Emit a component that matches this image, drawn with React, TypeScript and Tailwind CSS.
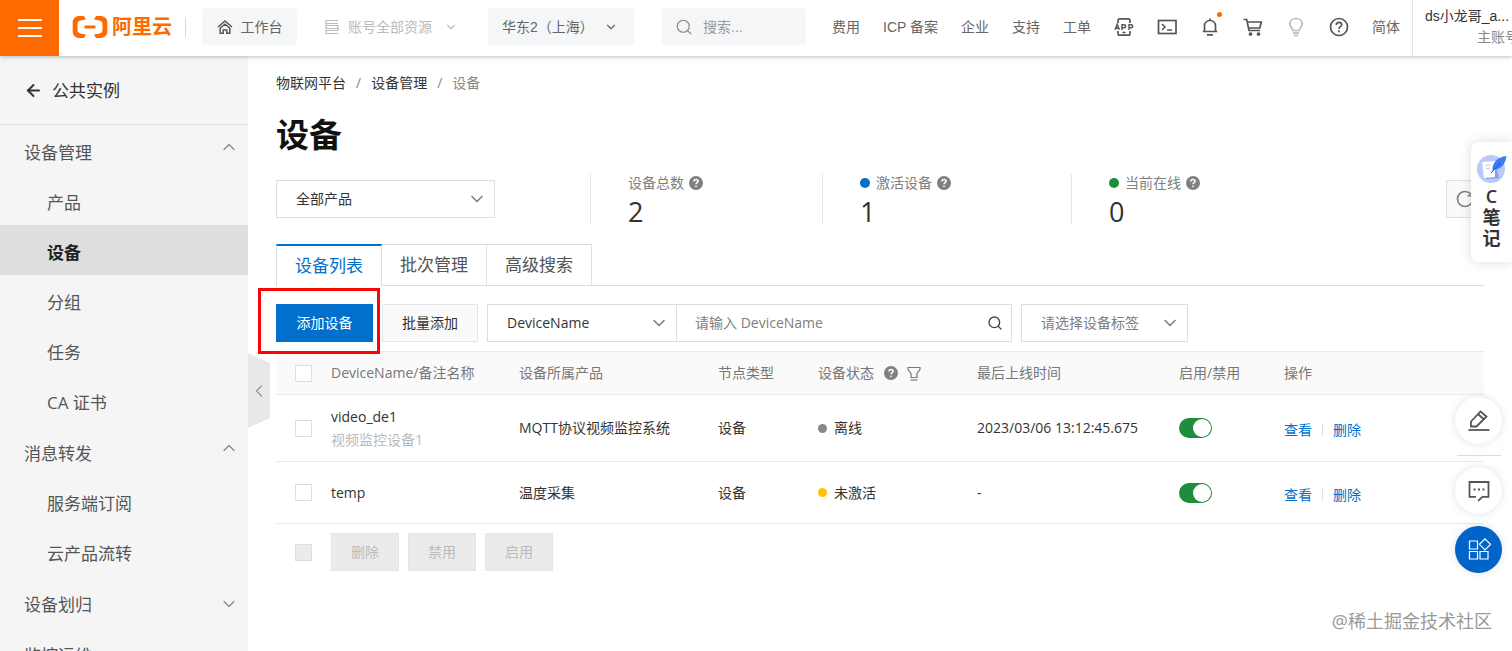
import type { ReactNode } from "react";
import {
  ArrowLeft,
  ChevronDown,
  ChevronLeft,
  ChevronUp,
  RotateCw,
  Search,
} from "lucide-react";
import { clsx } from "clsx";

type MenuItem = {
  label: string;
  kind: "group" | "item";
  open?: boolean;
  active?: boolean;
};

const menu: MenuItem[] = [
  { label: "设备管理", kind: "group", open: true },
  { label: "产品", kind: "item" },
  { label: "设备", kind: "item", active: true },
  { label: "分组", kind: "item" },
  { label: "任务", kind: "item" },
  { label: "CA 证书", kind: "item" },
  { label: "消息转发", kind: "group", open: true },
  { label: "服务端订阅", kind: "item" },
  { label: "云产品流转", kind: "item" },
  { label: "设备划归", kind: "group" },
  { label: "监控运维", kind: "group" },
];

const devices = [
  {
    name: "video_de1",
    remark: "视频监控设备1",
    product: "MQTT协议视频监控系统",
    type: "设备",
    status: "离线",
    dot: "bg-[#888888]",
    lastOnline: "2023/03/06 13:12:45.675",
  },
  {
    name: "temp",
    remark: "",
    product: "温度采集",
    type: "设备",
    status: "未激活",
    dot: "bg-[#ffc300]",
    lastOnline: "-",
  },
];

function LogoMark() {
  return (
    <svg width="36" height="22" viewBox="0 0 36 22" fill="none">
      <path
        d="M12 0H8C3.500 0 .7 2.500.7 6.500v9C.7 19.500 3.500 22 8 22h4l2-3.600-4.500-.7c-2.400-.4-4-1.200-4-3.700V8c0-2.500 1.600-3.300 4-3.700l4.500-.7z"
        fill="#ff6a00"
      />
      <path
        d="M24 0h4c4.500 0 7.300 2.500 7.300 6.500v9c0 4-2.800 6.500-7.300 6.500h-4l-2-3.600 4.500-.7c2.400-.4 4-1.200 4-3.700V8c0-2.500-1.600-3.300-4-3.700L22 3.600z"
        fill="#ff6a00"
      />
      <path d="M12.500 11h11" stroke="#ff6a00" strokeWidth="3" />
    </svg>
  );
}

function HomeIcon() {
  return (
    <svg width="16" height="16" viewBox="0 0 16 16" fill="none" stroke="#555" strokeWidth="1.500">
      <path d="M1 8 8 2l7 6" />
      <path d="M3.200 9v5.200h3V11h3.600v3.200h3V9L8 5.200z" />
    </svg>
  );
}

function StackIcon() {
  return (
    <svg width="16" height="16" viewBox="0 0 16 16" fill="none" stroke="#bbb" strokeWidth="1.200">
      <path d="M14 1.500H2v3h12M2 6.500h12v3H2zM14 11.500H2v3h12M2 4.500v2M14 9.500v2" />
    </svg>
  );
}

function TopIcon({ children, label, pale }: { children: ReactNode; label: string; pale?: boolean }) {
  return (
    <button type="button" aria-label={label} className="relative size-5 shrink-0">
      <svg
        width="20"
        height="20"
        viewBox="0 0 20 20"
        fill="none"
        stroke={pale ? "#bbb" : "#555"}
        strokeWidth="1.700"
      >
        {children}
      </svg>
    </button>
  );
}

function Help() {
  return (
    <svg width="14" height="14" viewBox="0 0 14 14" className="shrink-0">
      <circle cx="7" cy="7" r="7" fill="#808080" />
      <path
        d="M4.900 5.500C4.900 4.200 5.800 3.500 7 3.500s2.100.7 2.100 1.800C9.100 6.700 7 6.700 7 8.300"
        stroke="#fff"
        strokeWidth="1.500"
        fill="none"
      />
      <circle cx="7" cy="10.300" r="0.900" fill="#fff" />
    </svg>
  );
}

function FilterIcon() {
  return (
    <svg width="14" height="16" viewBox="0 0 14 16" fill="none" stroke="#777" strokeWidth="1.200">
      <path d="M1 2.500h12v2L10 8.500v4H4v-4L1 4.500z" />
      <path d="M3.500 15h7" />
    </svg>
  );
}

function Select({ label, value, className, muted }: { label: string; value: string; className: string; muted?: boolean }) {
  return (
    <div className={clsx("relative h-[38px] border border-[#dedede]", className)}>
      <select
        aria-label={label}
        className={clsx(
          "h-full w-full appearance-none bg-transparent pr-8 pl-[19px] text-sm outline-none",
          muted ? "text-[#808080]" : "text-[#333]",
        )}
      >
        <option>{value}</option>
      </select>
      <ChevronDown
        size={20}
        strokeWidth={2}
        className="pointer-events-none absolute top-2 right-[7px] text-[#808080]"
      />
    </div>
  );
}

function Checkbox({ label, disabled }: { label: string; disabled?: boolean }) {
  return (
    <input
      type="checkbox"
      aria-label={label}
      disabled={disabled}
      className="block size-[17px] appearance-none border border-[#dedede] bg-white disabled:bg-[#ebebeb]"
    />
  );
}

function Toggle({ label }: { label: string }) {
  return (
    <label className="relative block h-5 w-[33px]">
      <input
        type="checkbox"
        role="switch"
        defaultChecked
        aria-label={label}
        className="peer block h-5 w-[33px] appearance-none rounded-full bg-gray-300 checked:bg-[#1e8e3e]"
      />
      <span className="pointer-events-none absolute top-px left-px size-[18px] rounded-full bg-white peer-checked:right-px peer-checked:left-auto" />
    </label>
  );
}

function Stat({ label, value, dot, className }: { label: string; value: string; dot?: string; className?: string }) {
  return (
    <div className={clsx("h-[51px] border-l border-[#e8e8e8] pl-[37px]", className)}>
      <div className="flex h-[18px] items-center text-sm text-[#808080]">
        {dot && <span className={clsx("mr-[6px] size-[10px] rounded-full", dot)} />}
        <span className="mr-[5px]">{label}</span>
        <Help />
      </div>
      <div className="mt-1 text-[27px] leading-8 text-[#333]">{value}</div>
    </div>
  );
}

function TopBar() {
  return (
    <header className="relative z-20 flex h-14 shrink-0 items-center bg-white font-['Liberation_Sans','Noto_Sans_CJK_SC',sans-serif] text-sm text-[#666] shadow-[0_1px_4px_rgba(0,0,0,0.25)]">
      <button
        type="button"
        aria-label="菜单"
        className="flex h-14 w-[59px] shrink-0 flex-col items-center justify-center gap-[6px] bg-[#ff6a00]"
      >
        <span className="h-[2px] w-6 bg-white" />
        <span className="h-[2px] w-6 bg-white" />
        <span className="h-[2px] w-6 bg-white" />
      </button>
      <div className="flex h-full min-w-0 flex-1 items-center pb-[3px]">
        <a href="#" className="ml-[13px] flex shrink-0 items-center gap-1 text-xl font-bold text-[#ff6a00]">
          <LogoMark />
          阿里云
        </a>
        <span className="ml-[13px] h-5 w-px shrink-0 bg-[#d8d8d8]" />
        <a
          href="#"
          className="ml-4 flex h-[37px] w-[95px] shrink-0 items-center justify-center gap-2 rounded-sm bg-[#f4f6f7]"
        >
          <HomeIcon />
          工作台
        </a>
        <button type="button" className="ml-[27px] flex shrink-0 items-center gap-2 text-[#bbb]">
          <StackIcon />
          <span className="mr-1">账号全部资源</span>
          <ChevronDown size={14} />
        </button>
        <div className="relative ml-[30px] h-[37px] w-[146px] shrink-0 rounded-sm bg-[#f4f6f7]">
          <select aria-label="地域" className="h-full w-full appearance-none bg-transparent pl-[14px] outline-none">
            <option>华东2（上海）</option>
          </select>
          <ChevronDown size={14} className="pointer-events-none absolute top-3 right-4" />
        </div>
        <label className="ml-7 flex h-[37px] min-w-0 flex-1 items-center gap-[10px] rounded-sm bg-[#f4f6f7] pl-[13px]">
          <Search size={18} strokeWidth={1.500} className="shrink-0 text-[#888]" />
          <input
            type="text"
            aria-label="搜索"
            placeholder="搜索..."
            className="w-full min-w-0 bg-transparent outline-none placeholder:text-[#999]"
          />
        </label>
        <nav className="ml-[26px] flex shrink-0 items-center gap-[23px] pr-3">
          <a href="#">费用</a>
          <a href="#">ICP 备案</a>
          <a href="#">企业</a>
          <a href="#">支持</a>
          <a href="#">工单</a>
          <TopIcon label="应用">
            <path d="M4 6V3.500C4 2.500 4.700 1.800 5.700 1.800h8.600c1 0 1.700.7 1.700 1.700V6M4 14v2.500c0 1 .7 1.700 1.700 1.700h8.600c1 0 1.700-.7 1.700-1.700V14M8.500 15.500h3" />
            <path
              d="m1 12.800 2.200-5.600 2.200 5.600M1.800 11.200h2.800M8 13V7.700h2c2.300 0 2.300 3 0 3H8M15 13V7.700h2c2.300 0 2.300 3 0 3h-2"
              strokeWidth="1.400"
            />
          </TopIcon>
          <TopIcon label="命令行">
            <rect x="1.500" y="3.500" width="17.500" height="13" />
            <path d="m5 7 3 3-3 3M10 13h5" strokeWidth="1.500" />
          </TopIcon>
          <div className="relative flex">
            <TopIcon label="消息">
              <path d="M4.500 14.500V9C4.500 5.800 6.700 3.500 10 3.500s5.500 2.300 5.500 5.500v5.500M2.800 14.500h14.400M10 1.500v2M7 17.800h6" />
            </TopIcon>
            <span className="absolute -top-[5px] -right-[2px] size-[5px] rounded-full bg-[#ff6a00]" />
          </div>
          <TopIcon label="购物车">
            <path d="M.5 2.500h3.200L6 13.500h11M4.500 5h13.800l-1.500 6H5.800" />
            <circle cx="7.500" cy="17" r="1" />
            <circle cx="15.500" cy="17" r="1" />
          </TopIcon>
          <TopIcon label="提示" pale>
            <path d="M7 13.500c0-2-3.200-3-3.200-6.500C3.800 3.800 6.500 1.500 10 1.500S16.200 3.800 16.200 7c0 3.500-3.200 4.500-3.200 6.500zM7 16.200h6M8 18.500h4" />
          </TopIcon>
          <TopIcon label="帮助">
            <circle cx="10" cy="10" r="8.500" />
            <path d="M7.300 8C7.300 6.200 8.400 5.300 10 5.300s2.700 1 2.700 2.400C12.700 9.700 10 9.700 10 12" />
            <path d="M10 13.300v1.900" />
          </TopIcon>
          <a href="#">简体</a>
        </nav>
      </div>
      <div className="h-14 w-[100px] shrink-0 overflow-hidden border-l border-[#e5e5e5] pl-3">
        <div className="flex w-[94px] flex-col pt-[6px] leading-[21px]">
          <span className="whitespace-nowrap text-[#333]">ds小龙哥_a...</span>
          <span className="self-end text-[#888]">主账号</span>
        </div>
      </div>
    </header>
  );
}

function Sidebar() {
  return (
    <aside className="w-[248px] shrink-0 overflow-hidden bg-[#f5f5f5] text-[17px] text-[#555]">
      <a href="#" className="flex h-[69px] items-center gap-[9px] border-b border-[#dcdcdc] pl-6 text-[#333]">
        <ArrowLeft size={19} strokeWidth={2.500} />
        <span className="pt-[2px]">公共实例</span>
      </a>
      <ul>
        {menu.map((m) => (
          <li key={m.label} className={clsx(m.kind === "group" && "not-first:mt-px")}>
            <a
              href="#"
              className={clsx(
                "flex h-[50px] items-center justify-between pr-[9px]",
                m.kind === "group" ? "pl-6" : "pl-[47px]",
                m.active && "bg-[#dedede] font-bold text-[#222]",
              )}
            >
              <span className="pt-[6px]">{m.label}</span>
              {m.kind === "group" &&
                (m.open ? (
                  <ChevronUp size={20} strokeWidth={1.500} className="mb-[6px] text-[#888]" />
                ) : (
                  <ChevronDown size={20} strokeWidth={1.500} className="mt-1 text-[#888]" />
                ))}
            </a>
          </li>
        ))}
      </ul>
    </aside>
  );
}

function DeviceTable() {
  return (
    <table className="mt-[9px] w-full table-fixed text-left text-sm text-[#333]">
      <colgroup>
        <col className="w-9" />
        <col className="w-[188px]" />
        <col className="w-[199px]" />
        <col className="w-[100px]" />
        <col className="w-[159px]" />
        <col className="w-[202px]" />
        <col className="w-[105px]" />
        <col />
      </colgroup>
      <thead>
        <tr className="h-[43px] border-y border-[#ebebeb] bg-[#fafafa] text-[#777] [&>th]:pl-[19px] [&>th]:font-normal">
          <th>
            <Checkbox label="全选" />
          </th>
          <th>DeviceName/备注名称</th>
          <th>设备所属产品</th>
          <th>节点类型</th>
          <th>
            <span className="flex items-center">
              <span className="mr-[10px]">设备状态</span>
              <Help />
              <button type="button" aria-label="筛选" className="ml-[9px]">
                <FilterIcon />
              </button>
            </span>
          </th>
          <th>最后上线时间</th>
          <th>启用/禁用</th>
          <th>操作</th>
        </tr>
      </thead>
      <tbody>
        {devices.map((d) => (
          <tr
            key={d.name}
            className={clsx("border-b border-[#ebebeb] [&>td]:pl-[19px]", d.remark ? "h-[67px]" : "h-[62px]")}
          >
            <td>
              <Checkbox label={d.name} />
            </td>
            <td className="leading-[23px]">
              <div>{d.name}</div>
              {d.remark && <div className="text-[#bbb]">{d.remark}</div>}
            </td>
            <td className="whitespace-nowrap">{d.product}</td>
            <td>{d.type}</td>
            <td>
              <span className="flex items-center gap-[7px]">
                <span className={clsx("size-[9px] rounded-full", d.dot)} />
                {d.status}
              </span>
            </td>
            <td className="whitespace-nowrap">{d.lastOnline}</td>
            <td>
              <Toggle label={`启用 ${d.name}`} />
            </td>
            <td>
              <span className="flex items-center pt-1 text-[#0070cc]">
                <a href="#">查看</a>
                <span className="mx-[10px] h-3 w-px bg-[#dedede]" />
                <a href="#">删除</a>
              </span>
            </td>
          </tr>
        ))}
      </tbody>
    </table>
  );
}

function FloatingTools() {
  return (
    <>
      <button
        type="button"
        className="absolute top-[142px] right-0 z-30 flex h-[120px] w-[41px] flex-col items-center rounded-l-lg bg-white pt-3 text-lg leading-[21px] font-semibold text-[#333] shadow-[0_0_12px_rgba(0,0,0,0.15)]"
      >
        <svg width="30" height="30" viewBox="0 0 30 30" className="mb-[2px]">
          <circle cx="14" cy="15" r="14" fill="#b9c9fa" />
          <path d="m5 9 13-2 4 17-13 1z" fill="#7f9ff5" />
          <path d="m5 8 13-1v16l-11 1z" fill="#fff" />
          <path d="m8.500 11.500 5-.5M9 14.500l4-.4" stroke="#b9c9fa" strokeWidth="1.200" />
          <path d="M15.500 17C15 9 20 3 29.500 2 28.500 10 24 15.500 17.500 15.500z" fill="#3b7cf5" />
          <path d="m14 19 9-10" stroke="#1d56d8" strokeWidth="1" />
        </svg>
        <span>C</span>
        <span>笔</span>
        <span>记</span>
      </button>

      <div className="absolute right-[10px] bottom-[78px] z-30 flex flex-col items-center">
        <button
          type="button"
          aria-label="编辑"
          className="flex size-[47px] items-center justify-center rounded-full bg-white shadow-[0_0_8px_rgba(0,0,0,0.12)]"
        >
          <svg width="22" height="22" viewBox="0 0 22 22" fill="none" stroke="#555" strokeWidth="1.800">
            <path d="M3 16.500v-5L12.500 1.500l6 5L8.500 16.500zM10.500 4.500 15.500 9" />
            <path d="M.5 20h21" />
          </svg>
        </button>
        <span className="my-[11px] h-px w-11 bg-[#dcdcdc]" />
        <button
          type="button"
          aria-label="反馈"
          className="flex size-[47px] items-center justify-center rounded-full bg-white shadow-[0_0_8px_rgba(0,0,0,0.12)]"
        >
          <svg width="22" height="22" viewBox="0 0 22 22" fill="none" stroke="#555" strokeWidth="1.800">
            <path d="M8 16.800H1.500V2h19v14.800h-6l-4.500 4" />
            <path d="M5.500 9.500h2M10 9.500h2M14.500 9.500h2" strokeWidth="2" />
          </svg>
        </button>
        <button
          type="button"
          aria-label="应用中心"
          className="mt-3 flex size-[47px] items-center justify-center rounded-full bg-[#0064c8] shadow-[0_0_8px_rgba(0,0,0,0.12)]"
        >
          <svg width="24" height="24" viewBox="0 0 24 24" fill="none" stroke="#fff" strokeWidth="1.200">
            <path d="M2.500 3h8v8h-8zM2.500 13.500h8v7.500h-8zM13 13.500h8v7.500h-8zM18 .8l5.500 5.500-5.500 5.500-5.500-5.500z" />
          </svg>
        </button>
      </div>
    </>
  );
}

const tabs = ["设备列表", "批次管理", "高级搜索"];
const batchActions = ["删除", "禁用", "启用"];

export default function App() {
  return (
    <div className="relative flex h-screen flex-col overflow-hidden bg-white font-['Open_Sans','Noto_Sans_CJK_SC',sans-serif] text-[#333]">
      <TopBar />
      <div className="flex min-h-0 flex-1">
        <Sidebar />
        <main className="relative min-w-0 flex-1 px-7">
          <button type="button" aria-label="收起菜单" className="absolute top-[297px] left-0">
            <svg width="22" height="75" viewBox="0 0 22 75">
              <path d="M0 0 22 10v55L0 75z" fill="#e8e8e8" />
            </svg>
            <ChevronLeft size={20} strokeWidth={1.500} className="absolute top-7 left-px text-[#999]" />
          </button>

          <nav className="flex items-center gap-[10px] pt-4 text-sm leading-[22px]">
            <a href="#">物联网平台</a>
            <span className="text-[#888]">/</span>
            <a href="#">设备管理</a>
            <span className="text-[#888]">/</span>
            <span className="text-[#888]">设备</span>
          </nav>
          <h1 className="mt-4 text-[33px] leading-[50px] font-bold text-[#111]">设备</h1>

          <div className="mt-[14px] flex items-start">
            <Select label="产品" value="全部产品" className="mt-[6px] w-[219px]" />
            <Stat label="设备总数" value="2" className="ml-[95px] w-[232px]" />
            <Stat label="激活设备" value="1" dot="bg-[#0070cc]" className="w-[249px]" />
            <Stat label="当前在线" value="0" dot="bg-[#1e8e3e]" />
            <button
              type="button"
              aria-label="刷新"
              className="mt-[6px] ml-auto flex size-[38px] items-center justify-center border border-[#dedede] bg-[#fafafa]"
            >
              <RotateCw size={20} className="text-[#808080]" />
            </button>
          </div>

          <div role="tablist" className="mt-[19px] flex h-[42px] border-b border-[#dedede] text-[17px]">
            {tabs.map((t, i) => (
              <button
                key={t}
                type="button"
                role="tab"
                aria-selected={i === 0}
                className={clsx(
                  "h-[42px] border-r border-[#dedede]",
                  i === 0
                    ? "w-[106px] border-t-2 border-l border-t-[#0070cc] bg-white text-[#0070cc]"
                    : "w-[105px] border-t border-b text-[#555]",
                )}
              >
                {t}
              </button>
            ))}
          </div>

          <div className="mt-[18px] flex items-center text-sm">
            <div className="relative">
              <button type="button" className="h-[38px] w-[97px] bg-[#0070cc] text-white">
                添加设备
              </button>
              <span className="pointer-events-none absolute -top-4 -right-[7px] -bottom-3 -left-[18px] z-10 border-3 border-[#fa0505]" />
            </div>
            <button type="button" className="ml-[9px] h-[38px] w-24 border border-[#e5e5e5] bg-[#fafafa]">
              批量添加
            </button>
            <Select label="搜索字段" value="DeviceName" className="ml-[9px] w-[190px]" />
            <label className="-ml-px flex h-[38px] w-[336px] items-center border border-[#dedede] pr-2 pl-[18px]">
              <input
                type="text"
                aria-label="DeviceName"
                placeholder="请输入 DeviceName"
                className="min-w-0 flex-1 outline-none placeholder:text-[#808080]"
              />
              <Search size={16} className="text-[#444]" />
            </label>
            <Select label="设备标签" value="请选择设备标签" muted className="ml-[9px] w-[167px]" />
          </div>

          <DeviceTable />

          <div className="mt-[9px] flex items-center gap-[9px] pl-[19px] text-sm">
            <span className="mr-[10px]">
              <Checkbox label="批量选择" disabled />
            </span>
            {batchActions.map((a) => (
              <button
                key={a}
                type="button"
                disabled
                className="h-[38px] w-[68px] border border-[#e5e5e5] bg-[#ebebeb] text-[#bbb]"
              >
                {a}
              </button>
            ))}
          </div>
        </main>
      </div>
      <FloatingTools />
      <div className="absolute right-5 bottom-4 text-lg leading-7 text-[#999]">@稀土掘金技术社区</div>
    </div>
  );
}
